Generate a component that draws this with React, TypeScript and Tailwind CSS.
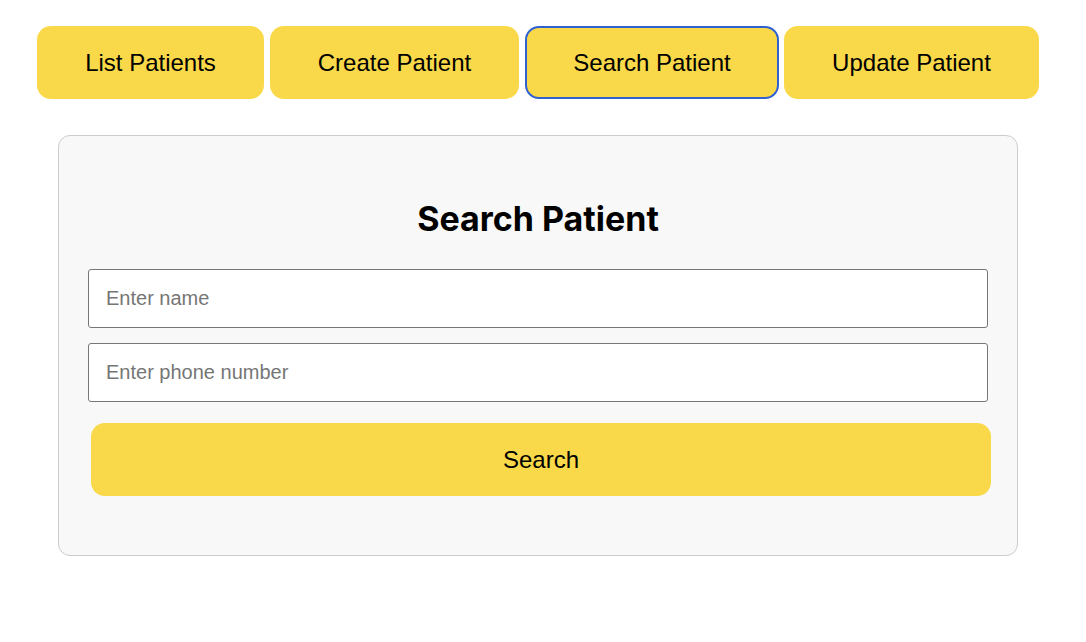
import { useState } from 'react';

const tabs = [
  { id: 'list', label: 'List Patients', width: 'w-[227px]', gap: 'ml-0' },
  { id: 'create', label: 'Create Patient', width: 'w-[249px]', gap: 'ml-[6px]' },
  { id: 'search', label: 'Search Patient', width: 'w-[254px]', gap: 'ml-[6px]' },
  { id: 'update', label: 'Update Patient', width: 'w-[255px]', gap: 'ml-[5px]' },
];

export default function App() {
  const [active, setActive] = useState('search');
  const [name, setName] = useState('');
  const [phone, setPhone] = useState('');

  return (
    <div className="min-h-screen bg-white font-['Liberation_Sans',Arial,sans-serif] text-black">
      {/* Tabs */}
      <div className="flex pl-[37px] pt-[26px]">
        {tabs.map((tab) => (
          <button
            key={tab.id}
            onClick={() => setActive(tab.id)}
            className={`${tab.width} ${tab.gap} h-[73px] rounded-[14px] bg-[#f9d949] text-[24px] ${
              active === tab.id ? 'border-2 border-[#2f62d0]' : 'border-2 border-transparent'
            }`}
          >
            {tab.label}
          </button>
        ))}
      </div>

      {/* Search card */}
      <div className="ml-[58px] mt-[36px] w-[960px] rounded-[12px] border border-[#cccccc] bg-[#f8f8f8] px-[29px] pt-[63px] pb-[59px]">
        <h2 className="mb-[30px] text-center font-['Inter',sans-serif] text-[34px] font-bold leading-[40px]">
          Search Patient
        </h2>
        <div className="flex flex-col gap-[15px]">
          <input
            value={name}
            onChange={(e) => setName(e.target.value)}
            placeholder="Enter name"
            className="h-[59px] w-[900px] rounded-[3px] border border-[#767676] bg-white px-[17px] text-[20px] placeholder:text-[#767676]"
          />
          <input
            value={phone}
            onChange={(e) => setPhone(e.target.value)}
            placeholder="Enter phone number"
            className="h-[59px] w-[900px] rounded-[3px] border border-[#767676] bg-white px-[17px] text-[20px] placeholder:text-[#767676]"
          />
        </div>
        <button className="ml-[3px] mt-[21px] h-[73px] w-[900px] rounded-[14px] bg-[#f9d949] text-[24px]">
          Search
        </button>
      </div>
    </div>
  );
}
